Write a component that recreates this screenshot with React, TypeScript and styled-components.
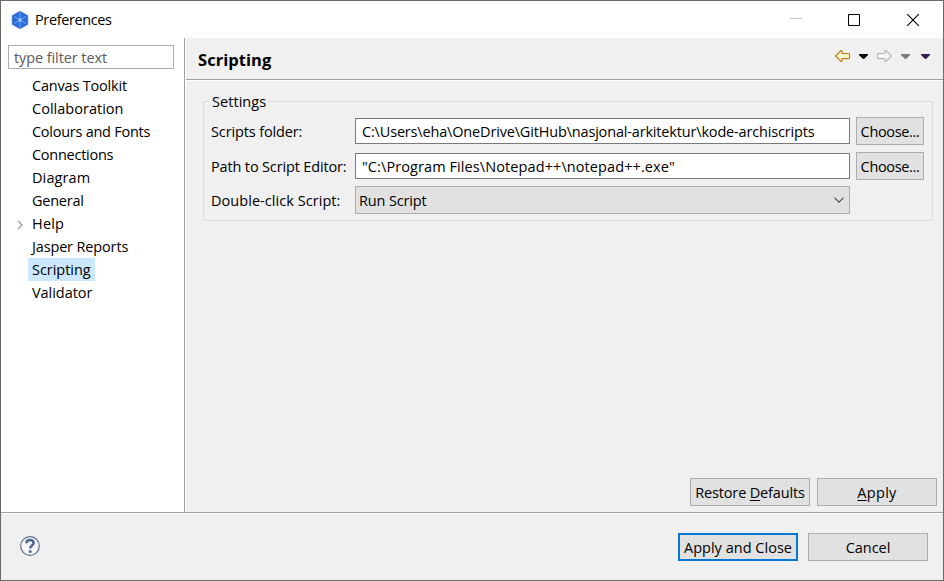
import React from 'react';
import styled, { createGlobalStyle } from 'styled-components';

const GlobalStyle = createGlobalStyle`
  * { box-sizing: border-box; }
  body {
    margin: 0;
    background: #f0f0f0;
    color: #000;
    font-family: 'Open Sans', 'Noto Sans', sans-serif;
    font-size: 14.5px;
    line-height: 22px;
  }
`;

const Window = styled.div`
  width: 944px;
  height: 581px;
  display: grid;
  grid-template-rows: 37px 475px 1fr;
  border: 1px solid #6b6a6b;
  background: #f0f0f0;
  overflow: hidden;
  white-space: nowrap;
`;

const Text = styled.span<{ $track?: number }>`
  letter-spacing: ${(p) => p.$track ?? 0}px;
  white-space: pre;
`;

const TitleBar = styled.header`
  display: flex;
  align-items: center;
  padding-left: 10px;
  background: #fff;
`;

const AppIcon = styled.svg`
  width: 18px;
  height: 20px;
  margin-right: 6px;
`;

const WindowControls = styled.div`
  display: flex;
  margin-left: auto;
  padding-right: 23px;
  gap: 45px;
  svg {
    display: block;
    width: 14px;
    height: 14px;
  }
`;

const Body = styled.div`
  display: grid;
  grid-template-columns: 184px 1fr;
  border-bottom: 1px solid #a0a0a0;
`;

const Sidebar = styled.nav`
  padding: 7px 10px 0 7px;
  background: #fff;
  border-right: 1px solid #a0a0a0;
`;

const FilterBox = styled.div`
  width: 166px;
  height: 24px;
  padding-left: 5px;
  margin-bottom: 5px;
  border: 1px solid #abadb3;
  color: #5c5c5c;
  line-height: 24px;
`;

const TreeRow = styled.div`
  display: flex;
  height: 23px;
`;

const Expander = styled.div`
  width: 20px;
  padding: 8px 0 0 9px;
  svg { display: block; }
`;

const TreeLabel = styled.div<{ $selected?: boolean }>`
  padding: 0 4px;
  line-height: 23px;
  background: ${(p) => (p.$selected ? '#cce8ff' : 'transparent')};
`;

const Page = styled.main`
  display: flex;
  flex-direction: column;
  border-left: 1px solid #fff;
`;

const PageHeader = styled.div`
  display: flex;
  justify-content: space-between;
  height: 42px;
  padding: 0 12px;
  border-bottom: 1px solid #a0a0a0;
  box-shadow: 0 1px 0 #fff;
`;

const PageTitle = styled.h1`
  margin: 0;
  padding-top: 1px;
  font-size: 16.5px;
  font-weight: 700;
  line-height: 42px;
`;

const NavTools = styled.div`
  display: flex;
  padding-top: 12px;
  svg { display: block; }
`;

const SettingsGroup = styled.fieldset`
  width: 730px;
  height: 130px;
  margin: 11px 0 0 17px;
  padding: 0 7px;
  border: 1px solid #dcdcdc;
`;

const Legend = styled.legend`
  height: 20px;
  padding: 0 2px 0 3px;
  margin-left: -2px;
`;

const FormGrid = styled.div`
  display: grid;
  grid-template-columns: 144px 495px 68px;
  grid-template-rows: 28px 28px 28px;
  row-gap: 6.5px;
  align-items: center;
  margin-top: 6px;
`;

const FieldLabel = styled.label`
  padding-top: 2px;
`;

const TextField = styled.div`
  height: 26px;
  padding-left: 6px;
  border: 1px solid #7a7a7a;
  background: #fff;
  line-height: 25px;
`;

const Combo = styled.div`
  display: flex;
  align-items: center;
  justify-content: space-between;
  height: 28px;
  padding: 0 4px 0 3px;
  border: 1px solid #adadad;
  background: #e1e1e1;
  line-height: 24px;
  ${Text} { padding-top: 2px; }
`;

const Button = styled.button<{ $width: number; $primary?: boolean }>`
  width: ${(p) => p.$width}px;
  height: 28px;
  padding: ${(p) => (p.$primary ? '2px 0 0' : '2px 0 0')};
  border: ${(p) => (p.$primary ? '2px solid #0078d7' : '1px solid #adadad')};
  border-radius: 0;
  background: #e1e1e1;
  color: #000;
  font: inherit;
  line-height: 22px;
`;

const ChooseButton = styled(Button)`
  margin-left: 6px;
`;

const Mnemonic = styled.span`
  text-decoration: underline;
  text-decoration-thickness: 1px;
  text-underline-offset: 2px;
`;

const PageActions = styled.div`
  display: flex;
  gap: 7px;
  justify-content: flex-end;
  margin-top: auto;
  padding: 0 6px 6px 0;
`;

const Footer = styled.footer`
  display: flex;
  align-items: flex-start;
  gap: 10px;
  padding: 20px 15px 0 19px;
  box-shadow: inset 0 1px 0 #fff;
`;

const HelpIcon = styled.svg`
  width: 20px;
  height: 20px;
  margin: 3px auto 0 0;
`;

const categories: { name: string; track: number; expandable?: boolean; selected?: boolean }[] = [
  { name: 'Canvas Toolkit', track: -0.19 },
  { name: 'Collaboration', track: 0.02 },
  { name: 'Colours and Fonts', track: -0.26 },
  { name: 'Connections', track: -0.26 },
  { name: 'Diagram', track: 0.1 },
  { name: 'General', track: -0.25 },
  { name: 'Help', track: 0.2, expandable: true },
  { name: 'Jasper Reports', track: -0.15 },
  { name: 'Scripting', track: -0.03, selected: true },
  { name: 'Validator', track: -0.05 },
];

const Caret = ({ color, width }: { color: string; width: number }) => (
  <svg width={width} height="12" viewBox={`0 0 ${width} 12`}>
    <path d="M0 4h9v1L5 9H4L0 5z" fill={color} />
  </svg>
);

const Arrow = ({ forward }: { forward?: boolean }) => (
  <svg width="15" height="12" viewBox="0 0 15 12">
    <path
      d="M.6 6 6 .6h1v2.900h6.700l.8.600v4l-.8.500H7v2.800H6z"
      transform={forward ? 'matrix(-1 0 0 1 15 0)' : undefined}
      fill={forward ? '#f5f5f5' : '#fff6cc'}
      stroke={forward ? '#b4b4b4' : '#bf7d16'}
      strokeWidth="1.1"
      strokeLinejoin="round"
    />
  </svg>
);

export default function App() {
  return (
    <>
      <GlobalStyle />
      <Window>
        <TitleBar>
          <AppIcon viewBox="0 0 18 20">
            <path d="M9 1 17 5.400v9.200L9 19 1 14.600V5.400z" fill="#2a62c8" stroke="#8fafe6" strokeWidth=".8" />
            <path d="M9 3 15.200 6.300v7.400L9 17 2.800 13.700V6.300z" fill="#2a6ee0" />
            <path d="M9 2.500v15M3 6.500l12 7M15 6.500 3 13.500" stroke="#69a3f3" strokeWidth="1" />
            <circle cx="9" cy="10" r="1.800" fill="#9cc9ff" />
          </AppIcon>
          <Text $track={-0.38}>Preferences</Text>
          <WindowControls>
            <svg viewBox="0 0 14 14"><path d="M2 5.500h12" stroke="#c8c8c8" /></svg>
            <svg viewBox="0 0 14 14"><path d="M1.500 1.500h11v11h-11z" fill="none" stroke="#000" /></svg>
            <svg viewBox="0 0 14 14"><path d="m1.200 1.200 11.600 11.600M12.800 1.200 1.200 12.800" stroke="#000" strokeWidth="1.100" /></svg>
          </WindowControls>
        </TitleBar>

        <Body>
          <Sidebar>
            <FilterBox><Text $track={-0.09}>type filter text</Text></FilterBox>
            {categories.map((c) => (
              <TreeRow key={c.name}>
                <Expander>
                  {c.expandable && (
                    <svg width="6" height="10" viewBox="0 0 6 10">
                      <path d="m1 .8 4 4.200-4 4.200" fill="none" stroke="#a6a6a6" strokeWidth="1.500" />
                    </svg>
                  )}
                </Expander>
                <TreeLabel $selected={c.selected}><Text $track={c.track}>{c.name}</Text></TreeLabel>
              </TreeRow>
            ))}
          </Sidebar>

          <Page>
            <PageHeader>
              <PageTitle><Text $track={0.05}>Scripting</Text></PageTitle>
              <NavTools>
                <Arrow />
                <svg width="9" height="12" />
                <Caret color="#000" width={18} />
                <Arrow forward />
                <svg width="9" height="12" />
                <Caret color="#77797c" width={20} />
                <Caret color="#33204f" width={10} />
              </NavTools>
            </PageHeader>

            <SettingsGroup>
              <Legend><Text $track={0.05}>Settings</Text></Legend>
              <FormGrid>
                <FieldLabel><Text $track={-0.13}>Scripts folder:</Text></FieldLabel>
                <TextField>
                  <Text $track={-0.17}>{'C:\\Users\\eha\\OneDrive\\GitHub\\nasjonal-arkitektur\\kode-archiscripts'}</Text>
                </TextField>
                <ChooseButton $width={68}><Text $track={-0.35}>Choose...</Text></ChooseButton>

                <FieldLabel><Text $track={-0.15}>Path to Script Editor:</Text></FieldLabel>
                <TextField>
                  <Text $track={0.09}>{'"C:\\Program Files\\Notepad++\\notepad++.exe"'}</Text>
                </TextField>
                <ChooseButton $width={68}><Text $track={-0.35}>Choose...</Text></ChooseButton>

                <FieldLabel><Text $track={0.05}>Double-click Script:</Text></FieldLabel>
                <Combo>
                  <Text $track={-0.15}>Run Script</Text>
                  <svg width="12" height="8" viewBox="0 0 12 8">
                    <path d="m1.500 1.700 4.500 4.500 4.500-4.500" fill="none" stroke="#484848" strokeWidth="1.100" />
                  </svg>
                </Combo>
              </FormGrid>
            </SettingsGroup>

            <PageActions>
              <Button $width={120}>
                <Text $track={-0.16}>Restore <Mnemonic>D</Mnemonic>efaults</Text>
              </Button>
              <Button $width={120}>
                <Text $track={0.3}><Mnemonic>A</Mnemonic>pply</Text>
              </Button>
            </PageActions>
          </Page>
        </Body>

        <Footer>
          <HelpIcon viewBox="0 0 20 20">
            <circle cx="10" cy="10" r="9.300" fill="#f6f7f9" stroke="#5b6f92" strokeWidth="1.200" />
            <path d="M6.400 7.300C6.500 5 7.900 4.100 10 4.100c2.200 0 3.600 1.100 3.600 2.900 0 2.500-3.400 2.700-3.400 5.600" fill="none" stroke="#4d6893" strokeWidth="2.500" />
            <circle cx="10.200" cy="15.400" r="1.500" fill="#4d6893" />
          </HelpIcon>
          <Button $width={120} $primary><Text $track={0.02}>Apply and Close</Text></Button>
          <Button $width={120}><Text $track={-0.05}>Cancel</Text></Button>
        </Footer>
      </Window>
    </>
  );
}
